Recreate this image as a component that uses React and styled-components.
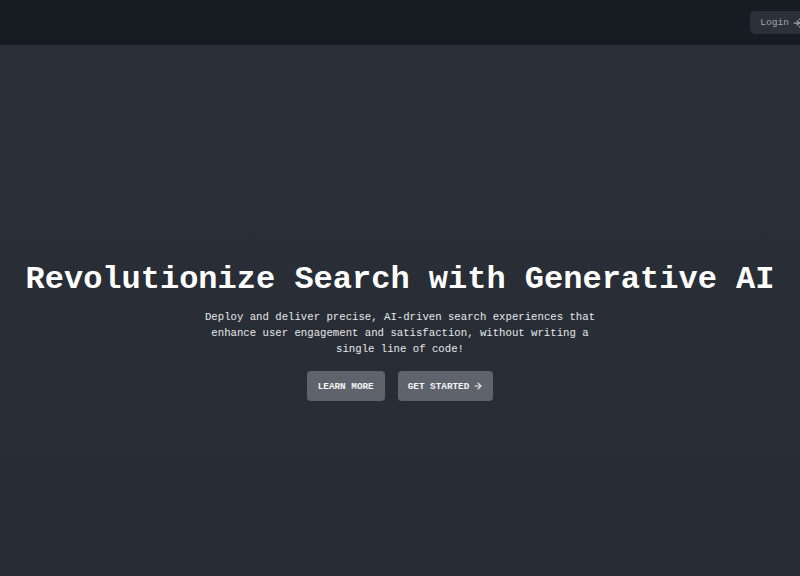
import React from "react"
import styled, { createGlobalStyle } from "styled-components"

const GlobalStyle = createGlobalStyle`
  html, body {
    margin: 0;
    padding: 0;
    background: #292e36;
    overflow: hidden;
  }
  * { box-sizing: border-box; }
`

const Page = styled.div`
  width: 800px;
  height: 576px;
  display: flex;
  flex-direction: column;
  background: linear-gradient(180deg, #2a2f37 0%, #282d35 100%);
  font-family: "Liberation Mono", "DejaVu Sans Mono", monospace;
  overflow: hidden;
`

const Header = styled.header`
  height: 45px;
  flex-shrink: 0;
  background: #171b22;
  display: flex;
  align-items: flex-start;
  justify-content: flex-end;
  padding-top: 11px;
`

const LoginButton = styled.button`
  flex-shrink: 0;
  margin-right: -13px;
  height: 23px;
  padding: 0 10px;
  display: flex;
  align-items: center;
  gap: 4px;
  border: none;
  border-radius: 5px;
  background: #2b3039;
  color: #a3a8b0;
  font-family: inherit;
  font-size: 9.6px;
  cursor: pointer;
`

const Hero = styled.main`
  flex: 1;
  display: flex;
  flex-direction: column;
  align-items: center;
  padding-top: 216px;
  text-align: center;
`

const Title = styled.h1`
  margin: 0;
  font-size: 32px;
  line-height: 38px;
  font-weight: 700;
  color: #ffffff;
  white-space: nowrap;
`

const Lead = styled.p`
  margin: 10px 0 0;
  width: 400px;
  font-size: 10.67px;
  line-height: 16px;
  color: #e6e8eb;
`

const Actions = styled.div`
  display: flex;
  gap: 13px;
  margin-top: 14px;
`

const ActionButton = styled.button`
  height: 30px;
  padding: 0 ${p => (p.$icon ? 10 : 11)}px;
  display: flex;
  align-items: center;
  gap: 4px;
  border: none;
  border-radius: 4px;
  background: #5f636b;
  color: #f4f5f6;
  font-family: inherit;
  font-size: 9.33px;
  font-weight: 700;
  cursor: pointer;
`

const LoginIcon = () => (
  <svg width="10" height="10" viewBox="0 0 24 24" fill="none" stroke="currentColor" strokeWidth="3" strokeLinecap="round" strokeLinejoin="round">
    <path d="M15 3h4a2 2 0 0 1 2 2v14a2 2 0 0 1-2 2h-4" />
    <path d="M10 17l5-5-5-5" />
    <path d="M15 12H3" />
  </svg>
)

const ArrowIcon = () => (
  <svg width="10" height="10" viewBox="0 0 24 24" fill="none" stroke="currentColor" strokeWidth="2.6" strokeLinecap="round" strokeLinejoin="round">
    <path d="M5 12h14" />
    <path d="M12 5l7 7-7 7" />
  </svg>
)

export default function App() {
  return (
    <Page>
      <GlobalStyle />
      <Header>
        <LoginButton>
          Login
          <LoginIcon />
        </LoginButton>
      </Header>
      <Hero>
        <Title>Revolutionize Search with Generative AI</Title>
        <Lead>
          Deploy and deliver precise, AI-driven search experiences that enhance user
          engagement and satisfaction, without writing a single line of code!
        </Lead>
        <Actions>
          <ActionButton>LEARN MORE</ActionButton>
          <ActionButton $icon>
            GET STARTED
            <ArrowIcon />
          </ActionButton>
        </Actions>
      </Hero>
    </Page>
  )
}
